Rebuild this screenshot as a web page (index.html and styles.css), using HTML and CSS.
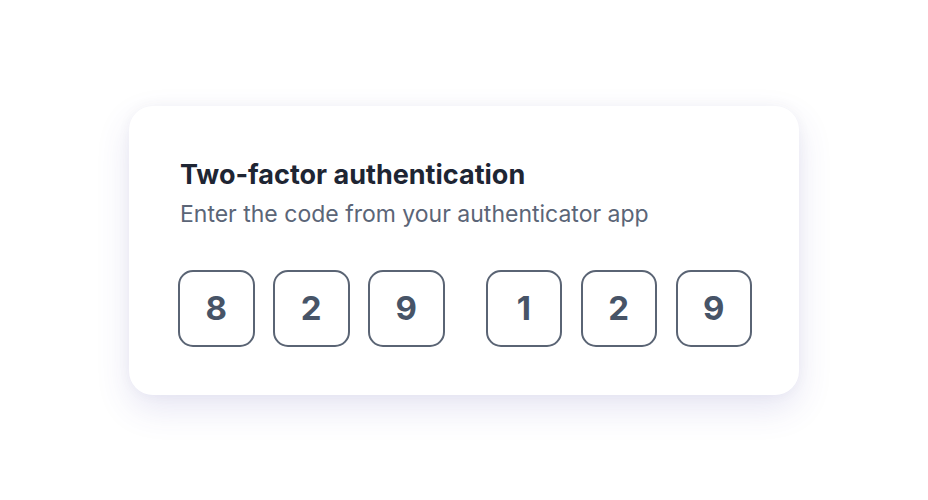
FILE: index.html
```html
<!DOCTYPE html>
<html lang="en">
<head>
<meta charset="utf-8">
<title>Two-factor authentication</title>
<link rel="stylesheet" href="styles.css">
</head>
<body>
<main class="page">
  <section class="card">
    <h1 class="title">Two-factor authentication</h1>
    <p class="subtitle">Enter the code from your authenticator app</p>
    <div class="code">
      <div class="group">
        <div class="digit">8</div>
        <div class="digit">2</div>
        <div class="digit">9</div>
      </div>
      <div class="group">
        <div class="digit">1</div>
        <div class="digit">2</div>
        <div class="digit">9</div>
      </div>
    </div>
  </section>
</main>
</body>
</html>
```
FILE: styles.css
```css
* { box-sizing: border-box; }
html, body { margin: 0; padding: 0; }
body {
  background: #ffffff;
  font-family: Inter, "Noto Sans", sans-serif;
}
.page {
  width: 928px;
  height: 500px;
  display: flex;
  align-items: center;
  justify-content: center;
}
.card {
  width: 670px;
  height: 289px;
  background: #ffffff;
  border-radius: 24px;
  padding: 53px 48px 48px 49px;
  display: flex;
  flex-direction: column;
  box-shadow: 0 0 14px rgba(40, 40, 80, 0.04), 0 14px 34px rgba(70, 60, 170, 0.13);
}
.title {
  margin: 0;
  font-size: 27px;
  font-weight: 700;
  line-height: 31px;
  color: #1e2533;
  padding-left: 2px;
}
.subtitle {
  margin: 11px 0 0;
  font-size: 23px;
  font-weight: 400;
  line-height: 27px;
  color: #5b6577;
  padding-left: 2px;
}
.code {
  margin-top: 42px;
  display: flex;
  gap: 41px;
}
.group {
  display: flex;
  gap: 18.5px;
}
.digit {
  width: 76.5px;
  height: 77px;
  border: 2px solid #5a6474;
  border-radius: 15px;
  display: flex;
  align-items: center;
  justify-content: center;
  font-size: 33px;
  font-weight: 700;
  color: #475467;
}
```
